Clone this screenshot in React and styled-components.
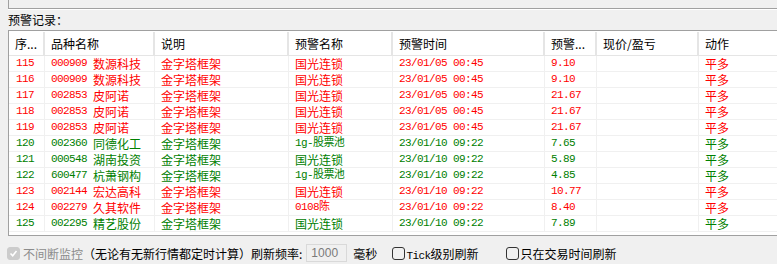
import styled, { createGlobalStyle } from "styled-components"

const GlobalStyle = createGlobalStyle`
    body {
        margin: 0;
        background: #f0f0f0;
        overflow: hidden;
        font-family: "Noto Sans CJK SC", "Noto Sans", sans-serif;
        font-size: 12px;
    }
`

const RED = "#ff0000"
const GREEN = "#008000"

const rows = [
    ["115", "000909", "数源科技", "金字塔框架", "国光连锁", "23/01/05 00:45", "9.10", "平多", RED],
    ["116", "000909", "数源科技", "金字塔框架", "国光连锁", "23/01/05 00:45", "9.10", "平多", RED],
    ["117", "002853", "皮阿诺", "金字塔框架", "国光连锁", "23/01/05 00:45", "21.67", "平多", RED],
    ["118", "002853", "皮阿诺", "金字塔框架", "国光连锁", "23/01/05 00:45", "21.67", "平多", RED],
    ["119", "002853", "皮阿诺", "金字塔框架", "国光连锁", "23/01/05 00:45", "21.67", "平多", RED],
    ["120", "002360", "同德化工", "金字塔框架", "1g-股票池", "23/01/10 09:22", "7.65", "平多", GREEN],
    ["121", "000548", "湖南投资", "金字塔框架", "国光连锁", "23/01/10 09:22", "5.89", "平多", GREEN],
    ["122", "600477", "杭萧钢构", "金字塔框架", "1g-股票池", "23/01/10 09:22", "4.85", "平多", GREEN],
    ["123", "002144", "宏达高科", "金字塔框架", "国光连锁", "23/01/10 09:22", "10.77", "平多", RED],
    ["124", "002279", "久其软件", "金字塔框架", "0108陈", "23/01/10 09:22", "8.40", "平多", RED],
    ["125", "002295", "精艺股份", "金字塔框架", "国光连锁", "23/01/10 09:22", "7.89", "平多", GREEN],
]

const headers = ["序...", "品种名称", "说明", "预警名称", "预警时间", "预警...", "现价/盈亏", "动作"]

const COLUMNS = "36px 110px 134px 104px 152px 52px 102px 1fr"

const Page = styled.div`
    width: 800px;
    padding-left: 8px;
    box-sizing: border-box;
    display: flex;
    flex-direction: column;
`

const TopPanel = styled.div`
    height: 8px;
    border-left: 1px solid #a0a0a0;
    border-bottom: 1px solid #a0a0a0;
    box-shadow: 0 1px 0 #ffffff;
`

const SectionLabel = styled.div`
    height: 21px;
    line-height: 21px;
    color: #000;
`

const Table = styled.div`
    border: 1px solid #a0a0a0;
    border-right: none;
    background: #ffffff;
    padding: 1px 0 3px 0;
`

const HeaderRow = styled.div`
    display: grid;
    grid-template-columns: ${COLUMNS};
    height: 24px;
    border-bottom: 1px solid #e5e5e5;
    box-sizing: border-box;
`

const HeaderCell = styled.div`
    display: flex;
    align-items: center;
    padding-left: 6px;
    border-right: 2px solid #e5e5e5;
    color: #000;
    white-space: nowrap;
    overflow: hidden;
`

const Row = styled.div`
    display: grid;
    grid-template-columns: ${COLUMNS};
    height: 16px;
    border-bottom: 1px solid #f0f0f0;
    box-sizing: border-box;
    color: ${p => p.$color};
`

const Cell = styled.div`
    display: flex;
    align-items: center;
    padding-left: ${p => p.$pad || 6}px;
    border-right: 1px solid #f0f0f0;
    white-space: nowrap;
    overflow: hidden;
    line-height: 15px;
`

const Mono = styled.span`
    font-family: "Liberation Mono", "Noto Sans CJK SC", monospace;
    font-size: 11px;
    letter-spacing: -0.6px;
    margin-right: ${p => p.$gap || 0}px;
`

const BottomBar = styled.div`
    display: flex;
    align-items: center;
    height: 18px;
    margin-top: 8px;
    white-space: nowrap;
`

const Check = styled.span`
    width: 13px;
    height: 13px;
    box-sizing: border-box;
    border-radius: 3px;
    display: inline-flex;
    align-items: center;
    justify-content: center;
    margin-left: ${p => p.$ml || 0}px;
    margin-right: 1px;
    background: ${p => (p.$disabled ? "#cccccc" : "transparent")};
    border: 1px solid ${p => (p.$disabled ? "#cccccc" : "#333333")};
`

const Text = styled.span`
    color: ${p => (p.$muted ? "#8c8c8c" : "#000")};
    margin-left: ${p => p.$ml || 0}px;
`

const NumberBox = styled.span`
    width: 41px;
    height: 18px;
    box-sizing: border-box;
    border: 1px solid #d9d9d9;
    background: #f0f0f0;
    margin-left: 4px;
    padding-left: 4px;
    display: inline-flex;
    align-items: center;
    color: #7a7a7a;
    font-family: "Liberation Sans", sans-serif;
    font-size: 12px;
`

const CheckMark = () => (
    <svg width="9" height="9" viewBox="0 0 9 9">
        <polyline points="1.5,4.5 3.7,6.7 7.5,2" fill="none" stroke="#ffffff" strokeWidth="1.6" />
    </svg>
)

const App = () => {
    return (
        <Page>
            <GlobalStyle />
            <TopPanel />
            <SectionLabel>预警记录：</SectionLabel>
            <Table>
                <HeaderRow>
                    {headers.map(h => (
                        <HeaderCell key={h}>{h}</HeaderCell>
                    ))}
                </HeaderRow>
                {rows.map(r => (
                    <Row key={r[0]} $color={r[8]}>
                        <Cell $pad={7}><Mono>{r[0]}</Mono></Cell>
                        <Cell><Mono $gap={6}>{r[1]}</Mono>{r[2]}</Cell>
                        <Cell>{r[3]}</Cell>
                        <Cell>{/^\d/.test(r[4]) ? <Mono>{r[4]}</Mono> : r[4]}</Cell>
                        <Cell><Mono>{r[5]}</Mono></Cell>
                        <Cell><Mono>{r[6]}</Mono></Cell>
                        <Cell />
                        <Cell>{r[7]}</Cell>
                    </Row>
                ))}
            </Table>
            <BottomBar>
                <Check $disabled $ml={-1}><CheckMark /></Check>
                <Text $muted $ml={2}>不间断监控</Text>
                <Text>（无论有无新行情都定时计算）刷新频率:</Text>
                <NumberBox>1000</NumberBox>
                <Text $ml={6}>毫秒</Text>
                <Check $ml={15} />
                <Text><Mono>Tick</Mono>级别刷新</Text>
                <Check $ml={28} />
                <Text>只在交易时间刷新</Text>
            </BottomBar>
        </Page>
    )
}

export default App
